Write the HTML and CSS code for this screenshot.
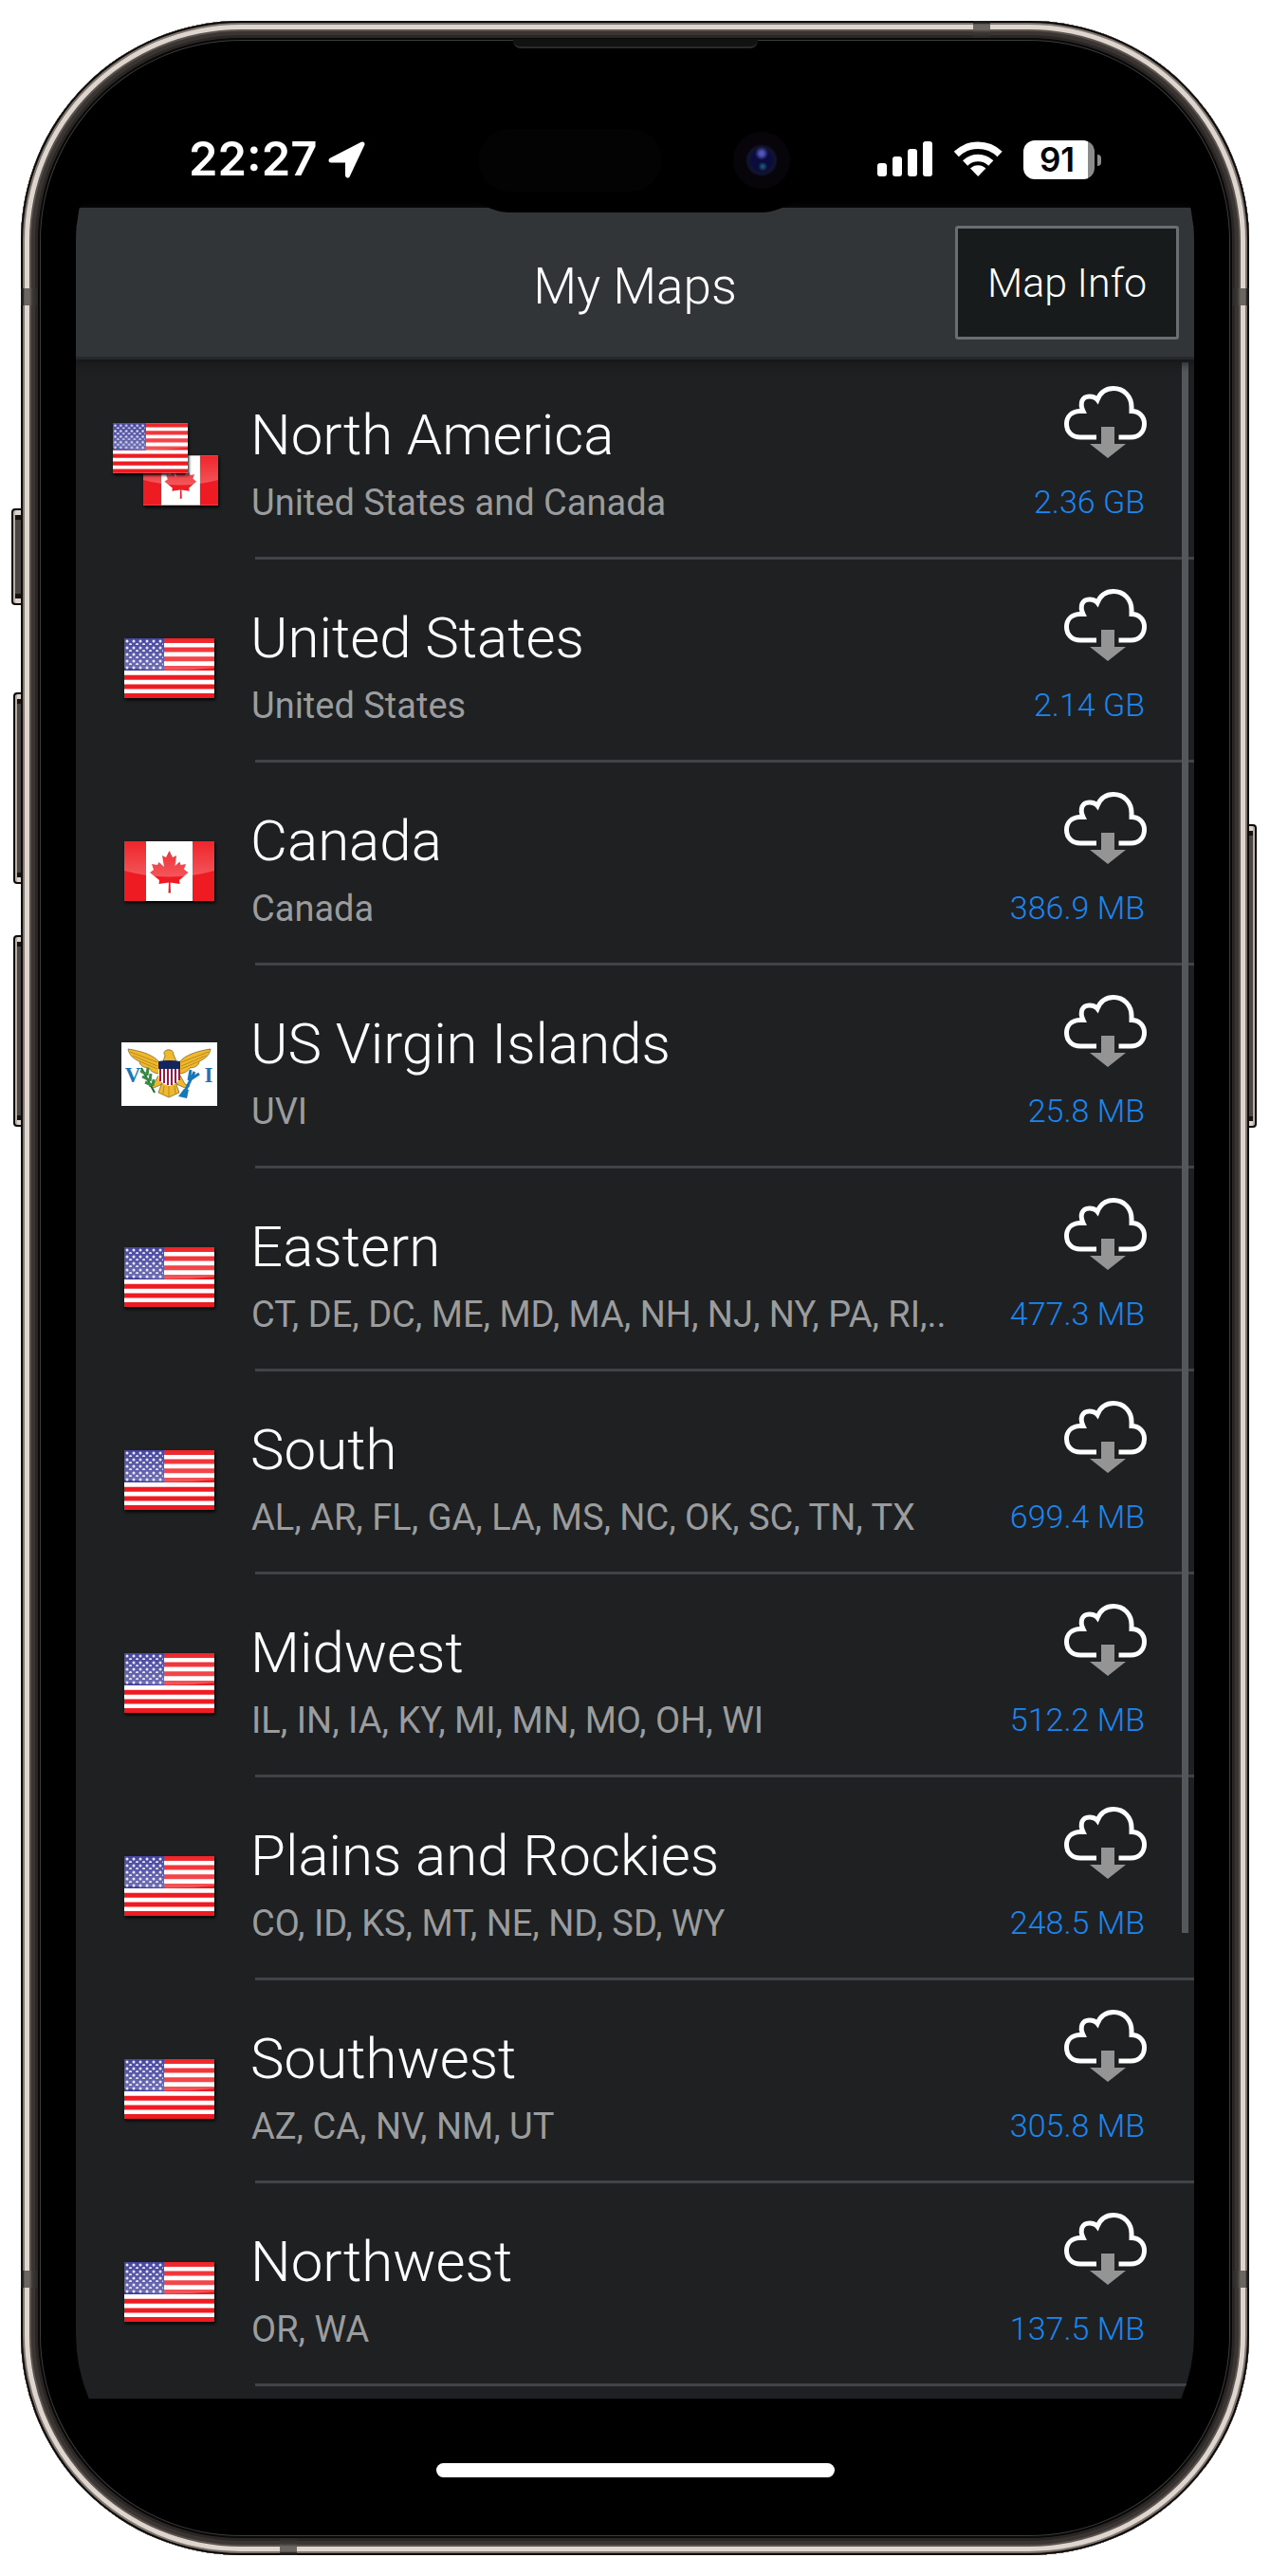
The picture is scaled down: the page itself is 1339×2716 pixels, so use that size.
FILE: index.html
```html
<!DOCTYPE html>
<html lang="en">
<head>
<meta charset="utf-8">
<meta name="viewport" content="width=device-width, initial-scale=1">
<title>My Maps</title>
<link rel="stylesheet" href="styles.css">
</head>
<body>
<svg class="defs" aria-hidden="true">
  <defs>
    <linearGradient id="gloss" x1="0" y1="0" x2="0" y2="1">
      <stop offset="0" stop-color="#fff" stop-opacity=".04"/>
      <stop offset="1" stop-color="#fff" stop-opacity=".26"/>
    </linearGradient>
    <pattern id="stars" width="7" height="7" patternUnits="userSpaceOnUse">
      <circle cx="3" cy="3" r="1.5" fill="#e4e4f4"/>
      <circle cx="6.5" cy="6.5" r="1.5" fill="#e4e4f4"/>
      <circle cx="-.5" cy="6.5" r="1.5" fill="#e4e4f4"/>
    </pattern>
    <path id="leaf" d="M47.500 10 L51 17 L55 15 L53.500 26 L58.500 21.500 L59.500 25 L65 24 L63 29.500 L67.500 33 L58 41 L58.500 45 L48.500 43.500 L49 54.500 L46.500 54.500 L47 43.500 L36.500 45 L37 41 L27 33 L31 30 L29 24 L35 25 L36.500 22 L42 27 L40 15 L44 17 Z"/>
    <symbol id="us" viewBox="0 0 95 63">
      <rect width="95" height="63" fill="#fff"/>
      <path d="M0 2.500H95M0 12.100H95M0 21.800H95M0 31.500H95M0 41.200H95M0 50.900H95M0 60.500H95" stroke="#ee1c22" stroke-width="5"/>
      <rect width="42" height="34" fill="#3f3f9b"/>
      <rect x="1" y="1" width="40" height="32" fill="url(#stars)"/>
      <path d="M0 0H95V31Q48 36 0 31Z" fill="url(#gloss)"/>
    </symbol>
    <symbol id="ca" viewBox="0 0 95 63">
      <rect width="95" height="63" fill="#fff"/>
      <path d="M0 0H23V63H0ZM72 0H95V63H72Z" fill="#ee1c22"/>
      <use href="#leaf" fill="#ee1c22"/>
      <path d="M0 0H95V31Q48 44 0 31Z" fill="url(#gloss)"/>
    </symbol>
    <symbol id="cloud" viewBox="0 0 87 76">
      <path d="M34 54H17C8 54 2.500 48 2.500 40C2.500 32 8 27 16 26.500L20 26.500C16 18 19 11 26.500 11C30 11 33 12 35 14.500C38 7 44 2.500 52 2.500C63 2.500 71 11 71 22V26.500C79 26.500 84.500 32 84.500 40C84.500 48 79 54 70.500 54H57.500" fill="none" stroke="#fff" stroke-width="5"/>
      <path d="M39 43H53V61H65L46 76L27 61H39Z" fill="#949494"/>
    </symbol>
  </defs>
</svg>
<div class="phone">
  <i class="key key-action"></i><i class="key key-up"></i><i class="key key-down"></i><i class="key key-power"></i>
  <i class="band band-left"></i><i class="band band-right"></i><i class="band band-left band-low"></i><i class="band band-right band-low"></i>
  <i class="band-flat band-top"></i><i class="band-flat band-bottom"></i>
  <i class="speaker"></i>
  <div class="island"><i class="sensor"></i><i class="camera"></i></div>
  <main class="screen">
    <div class="status">
      <div class="status-left">
        <span class="time">22:27</span>
        <svg width="39" height="39" viewBox="0 0 39 39"><path d="M36 3L20.500 36V20H3Z" fill="#fff" stroke="#fff" stroke-width="5" stroke-linejoin="round"/></svg>
      </div>
      <div class="status-right">
        <svg width="59" height="38" viewBox="0 0 59 38" fill="#fff"><rect y="23" width="10" height="14" rx="3"/><rect x="16" y="16" width="10" height="21" rx="3"/><rect x="32" y="8" width="10" height="29" rx="3"/><rect x="48" width="10" height="37" rx="3"/></svg>
        <svg width="51" height="38" viewBox="0 0 51 38"><path d="M2.300 13.500A33 33 0 0 1 48.100 13.500" fill="none" stroke="#fff" stroke-width="7.400"/><path d="M11.600 23A19.600 19.600 0 0 1 38.800 23" fill="none" stroke="#fff" stroke-width="7.400"/><path d="M17 28.500A11.700 11.700 0 0 1 33.400 28.500L25.200 37Z" fill="#fff"/></svg>
        <div class="battery"><span>91</span></div>
      </div>
    </div>
    <header class="bar">
      <h1>My Maps</h1>
      <button type="button">Map Info</button>
    </header>
    <ul class="list">
      <li class="row"><div class="flags pair"><svg><use href="#us"/></svg><svg><use href="#ca"/></svg></div><div class="body"><div class="text"><h2>North America</h2><p>United States and Canada</p></div><div class="get"><svg><use href="#cloud"/></svg><span>2.36 GB</span></div></div></li>
      <li class="row"><div class="flags"><svg><use href="#us"/></svg></div><div class="body"><div class="text"><h2>United States</h2><p>United States</p></div><div class="get"><svg><use href="#cloud"/></svg><span>2.14 GB</span></div></div></li>
      <li class="row"><div class="flags"><svg><use href="#ca"/></svg></div><div class="body"><div class="text"><h2>Canada</h2><p>Canada</p></div><div class="get"><svg><use href="#cloud"/></svg><span>386.9 MB</span></div></div></li>
      <li class="row"><div class="flags"><svg class="vi" viewBox="0 0 101 67">
        <rect width="101" height="67" fill="#fff"/>
        <g fill="#f0b92c" stroke="#806a2e" stroke-width=".8">
          <path d="M40 21C34 13 20 9 7 7C8 14 14 18 19 20C19 25 25 27 29 27C31 31 36 33 40 33Z"/>
          <path d="M61 21C67 13 81 9 94 7C93 14 87 18 82 20C82 25 76 27 72 27C70 31 65 33 61 33Z"/>
          <path d="M44 20L46 14Q43 10 48 8Q55 7 55 13L58 20Z"/>
          <path d="M43 42L39 53L50 58L61 53L57 42Z"/>
          <path d="M39 35L34 44L29 46L34 48L43 44ZM62 35L67 44L72 46L67 48L58 44Z"/>
        </g>
        <path d="M9 10L38 21M12 14L38 25M19 20L38 28M92 10L63 21M89 14L63 25M82 20L63 28M45 46L44 54M50 46V57M56 46L57 54" stroke="#b98a22" fill="none"/>
        <path d="M39 28H62V36Q62 43 50.500 46Q39 43 39 36Z" fill="#fff"/>
        <path d="M41 28V41M45 28V43M49 28V45M53 28V45M57 28V43M61 28V40" stroke="#a21645" stroke-width="2"/>
        <path d="M39 20Q50 18 62 20V28H39Z" fill="#14245c"/>
        <path d="M21 27L35 53" stroke="#1d6b30" stroke-width="2"/>
        <path d="M20 30L27 34M28 27L27 35M22 36L30 40M31 33L30 41M25 42L32 45M34 39L33 46" stroke="#3a8b46" stroke-width="3"/>
        <path d="M66 54L77 31M71 40L73 29M73 39L82 33" stroke="#1678ba" stroke-width="3"/>
        <path d="M66 49L60 57L69 59L71 50Z" fill="#1678ba"/>
        <text x="12" y="42" class="vi-letter">V</text><text x="92" y="42" class="vi-letter">I</text>
      </svg></div><div class="body"><div class="text"><h2>US Virgin Islands</h2><p>UVI</p></div><div class="get"><svg><use href="#cloud"/></svg><span>25.8 MB</span></div></div></li>
      <li class="row"><div class="flags"><svg><use href="#us"/></svg></div><div class="body"><div class="text"><h2>Eastern</h2><p>CT, DE, DC, ME, MD, MA, NH, NJ, NY, PA, RI,..</p></div><div class="get"><svg><use href="#cloud"/></svg><span>477.3 MB</span></div></div></li>
      <li class="row"><div class="flags"><svg><use href="#us"/></svg></div><div class="body"><div class="text"><h2>South</h2><p>AL, AR, FL, GA, LA, MS, NC, OK, SC, TN, TX</p></div><div class="get"><svg><use href="#cloud"/></svg><span>699.4 MB</span></div></div></li>
      <li class="row"><div class="flags"><svg><use href="#us"/></svg></div><div class="body"><div class="text"><h2>Midwest</h2><p>IL, IN, IA, KY, MI, MN, MO, OH, WI</p></div><div class="get"><svg><use href="#cloud"/></svg><span>512.2 MB</span></div></div></li>
      <li class="row"><div class="flags"><svg><use href="#us"/></svg></div><div class="body"><div class="text"><h2>Plains and Rockies</h2><p>CO, ID, KS, MT, NE, ND, SD, WY</p></div><div class="get"><svg><use href="#cloud"/></svg><span>248.5 MB</span></div></div></li>
      <li class="row"><div class="flags"><svg><use href="#us"/></svg></div><div class="body"><div class="text"><h2>Southwest</h2><p>AZ, CA, NV, NM, UT</p></div><div class="get"><svg><use href="#cloud"/></svg><span>305.8 MB</span></div></div></li>
      <li class="row"><div class="flags"><svg><use href="#us"/></svg></div><div class="body"><div class="text"><h2>Northwest</h2><p>OR, WA</p></div><div class="get"><svg><use href="#cloud"/></svg><span>137.5 MB</span></div></div></li>
      <li class="thumb" aria-hidden="true"></li>
    </ul>
    <div class="home"><i></i></div>
  </main>
</div>
</body>
</html>
```
FILE: styles.css
```css
* { box-sizing: border-box; }
body { margin: 0; padding: 22px; background: #fff; font-family: Roboto, sans-serif; }
h1, h2, p, ul { margin: 0; padding: 0; font-weight: 300; }
ul { list-style: none; }
svg { display: block; flex: none; }
.defs { position: absolute; width: 0; height: 0; }

/* device shell */
.phone {
  position: relative;
  padding: 58px;
  border-radius: 232px;
  background: #000;
  box-shadow:
    inset 0 0 0 2px #0c0a0a,
    inset 0 0 0 4px #7d756e,
    inset 0 0 0 9px #ddd5ce,
    inset 0 0 0 11px #5b534e,
    inset 0 0 0 15px #3a3533,
    inset 0 0 0 18px #2a2625,
    inset 0 0 0 20px #080808,
    inset 0 0 0 21px #3c3c3c;
}
.key {
  position: absolute;
  z-index: -1;
  width: 16px;
  border: 2px solid #0d0b0b;
  border-radius: 4px;
  background: #4b4643;
  box-shadow: inset 2px 0 #b8aea5, inset 0 5px #ddd5ce, inset 0 -5px #ddd5ce, inset 0 10px #151211, inset 0 -10px #151211;
}
.key-action { left: -10px; top: 514px; height: 102px; }
.key-up { left: -8px; top: 708px; height: 202px; }
.key-down { left: -8px; top: 964px; height: 202px; }
.key-power { right: -8px; top: 847px; height: 320px; transform: scaleX(-1); }
.band, .band-flat { position: absolute; width: 18px; height: 18px; }
.band { top: 282px; }
.band-left { left: 0; background: linear-gradient(90deg, #1c1a1a 0 2px, #6b6662 4px 9px, #3d3937 12px, #2a2726); }
.band-right { right: 0; background: linear-gradient(270deg, #1c1a1a 0 2px, #6b6662 4px 9px, #3d3937 12px, #2a2726); }
.band-low { top: auto; bottom: 282px; }
.band-top { right: 273px; top: 0; background: linear-gradient(#1c1a1a 0 2px, #6b6662 4px 9px, #3d3937 12px, #2a2726); }
.band-bottom { left: 273px; bottom: 0; background: linear-gradient(0deg, #1c1a1a 0 2px, #6b6662 4px 9px, #3d3937 12px, #2a2726); }
.speaker {
  position: absolute;
  top: 19px;
  left: 50%;
  width: 258px;
  height: 10px;
  transform: translateX(-50%);
  border-bottom: 2px solid #2b2b2b;
  border-radius: 0 0 8px 8px;
  background: #121212;
}
.island {
  position: absolute;
  z-index: 2;
  top: 92px;
  left: 50%;
  width: 374px;
  height: 110px;
  transform: translateX(-50%);
  border-radius: 55px;
  background: #000;
  display: flex;
  align-items: center;
  justify-content: space-between;
  padding: 0 24px 0 21px;
}
.sensor { width: 194px; height: 66px; border-radius: 33px; background: #030303; }
.camera {
  width: 60px;
  height: 60px;
  border-radius: 50%;
  background:
    radial-gradient(circle at 50% 38%, #5157b8 0 2px, transparent 7px),
    radial-gradient(circle at 52% 61%, #17586b 0 1px, transparent 5px),
    radial-gradient(circle, #0b0b3f 0 10px, #10132d 13px 15px, #07040a 17px);
}

/* screen */
.screen { overflow: hidden; border-radius: 175px; background: #000; color: #fff; }
.status { display: flex; justify-content: space-between; height: 139px; padding: 63px 105px 0 119px; }
.status-left, .status-right { display: flex; align-items: center; height: 50px; }
.status-left { gap: 12px; }
.status-right { gap: 22px; }
.time { font: 600 49px/50px Inter, sans-serif; }
.battery {
  position: relative;
  width: 75px;
  height: 41px;
  border-radius: 12px;
  background: linear-gradient(90deg, #fff 68px, #8c8c8c 68px);
  color: #000;
  text-align: center;
  padding-right: 4px;
  font: 600 35px/41px Inter, sans-serif;
}
.battery::after {
  content: "";
  position: absolute;
  right: -7px;
  top: 15px;
  width: 4px;
  height: 12px;
  border-radius: 0 6px 6px 0;
  background: #8c8c8c;
}
.bar {
  position: relative;
  z-index: 1;
  display: grid;
  grid-template-columns: 1fr auto 1fr;
  align-items: center;
  height: 157px;
  padding: 0 16px;
  background: #313537;
  box-shadow: 0 3px #25292c, 0 4px 10px 2px #141516;
}
.bar h1 { grid-column: 2; font-size: 53px; line-height: 60px; padding-top: 8px; }
.bar button {
  justify-self: end;
  width: 236px;
  height: 120px;
  border: 3px solid #6a6e71;
  border-radius: 3px;
  background: #171b1c;
  color: #fff;
  font: 300 43px/60px Roboto, sans-serif;
}
.list { position: relative; padding-bottom: 13px; background: #1e2021; }
.row { display: flex; height: 214px; }
.flags { width: 189px; padding: 83px 0 0 51px; }
.flags svg { width: 95px; height: 63px; box-shadow: 1px 2px 3px #000; }
.flags .vi { width: 101px; height: 67px; margin: -2px 0 0 -3px; box-shadow: none; }
.vi-letter { fill: #1678ba; font: 700 23px "Liberation Serif", serif; text-anchor: middle; }
.pair { display: grid; align-content: start; padding: 70px 0 0 39px; }
.pair svg { grid-area: 1 / 1; width: 79px; height: 53px; }
.pair svg:first-child { z-index: 1; }
.pair svg:last-child { margin: 34px 0 0 32px; }
.body { flex: 1; min-width: 0; display: flex; justify-content: space-between; border-bottom: 3px solid #414349; }
.text { min-width: 0; padding-top: 48px; margin-left: -5px; }
.text h2 { font-size: 60px; line-height: 70px; }
.text p { margin-top: 14px; padding-left: 1px; color: #9b9c9e; font-size: 38px; line-height: 44px; font-weight: 400; white-space: nowrap; }
.get { flex: none; display: flex; flex-direction: column; align-items: flex-end; padding: 31px 50px 0 0; }
.get svg { width: 87px; height: 76px; }
.get span { margin-top: 26px; padding-right: 2px; color: #1a86f0; font-size: 34px; line-height: 40px; font-weight: 300; }
.thumb { position: absolute; top: 6px; right: 6px; width: 7px; height: 1656px; background: #55575a; }
.home { display: flex; justify-content: center; height: 107px; padding-top: 68px; }
.home i { width: 420px; height: 15px; border-radius: 8px; background: #fff; }
```
